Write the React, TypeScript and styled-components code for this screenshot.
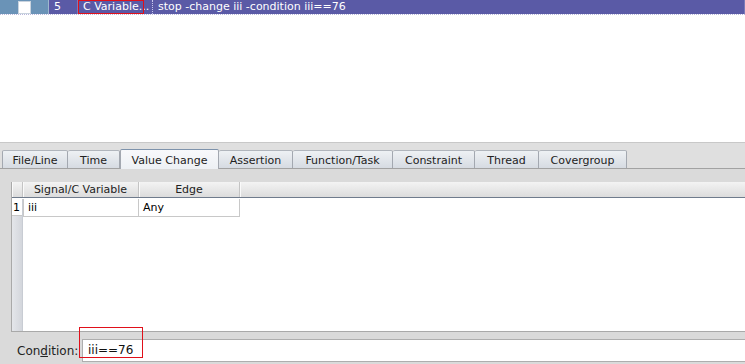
import React from 'react';
import styled, { createGlobalStyle } from 'styled-components';

const GlobalStyle = createGlobalStyle`
	html, body {
		margin: 0;
		padding: 0;
		background: #ffffff;
	}
	body {
		font-family: "DejaVu Sans", "Liberation Sans", sans-serif;
		font-size: 11px;
	}
`;

const Window = styled.div`
	width: 745px;
	height: 364px;
	overflow: hidden;
	display: flex;
	flex-direction: column;
	background: #ffffff;
`;

/* breakpoint list at the top */

const ListArea = styled.div`
	height: 142px;
	background: #ffffff;
	display: flex;
	flex-direction: column;
`;

const SelectedRow = styled.div`
	display: grid;
	grid-template-columns: 49px 29px 75px 1fr;
	height: 14px;
	border-bottom: 1px dotted #b8b8dc;
	color: #ffffff;
	line-height: 14px;
`;

const EnableCell = styled.div`
	background: #6a93b7;
	border-right: 1px solid #9fb7cf;
	display: flex;
	align-items: center;
	justify-content: center;
`;

const CheckBox = styled.span`
	display: block;
	width: 11px;
	height: 11px;
	background: #ffffff;
	border: 1px solid #c9d3de;
`;

const Cell = styled.div<{ $dotted?: boolean }>`
	position: relative;
	background: #5a5aa6;
	padding-left: 5px;
	white-space: nowrap;
	overflow: hidden;
	border-right: ${(p) => (p.$dotted ? '1px dotted #c8c8ec' : '1px solid #7a7ab8')};
`;

const Highlight = styled.span<{ $w: number; $h: number }>`
	position: absolute;
	left: 0;
	top: 0;
	width: ${(p) => p.$w}px;
	height: ${(p) => p.$h}px;
	border: 1px solid #e0101a;
	box-sizing: border-box;
	pointer-events: none;
`;

/* tabs */

const TabBar = styled.div`
	height: 27px;
	box-sizing: border-box;
	border-top: 1px solid #c8c8c8;
	border-bottom: 1px solid #a2a2a2;
	background: #dfdfdf;
	display: flex;
	align-items: flex-end;
	padding-left: 2px;
`;

const Tab = styled.div<{ $active?: boolean; $w: number }>`
	position: relative;
	width: ${(p) => p.$w}px;
	height: ${(p) => (p.$active ? '20px' : '18px')};
	margin-bottom: ${(p) => (p.$active ? '-1px' : '0')};
	box-sizing: border-box;
	display: flex;
	align-items: center;
	justify-content: center;
	white-space: nowrap;
	color: #222222;
	border: 1px solid #a3a8b0;
	border-bottom: none;
	border-left: ${(p) => (p.$active ? '1px solid #a3a8b0' : 'none')};
	border-top: 1px solid ${(p) => (p.$active ? '#7d92ab' : '#b0b5bc')};
	border-radius: 2px 2px 0 0;
	padding-top: ${(p) => (p.$active ? '1px' : '1px')};
	background: ${(p) =>
		p.$active
			? 'linear-gradient(#f8f9fb, #edf0f4)'
			: 'linear-gradient(#eef1f4, #d6dbe2)'};
	&:first-child {
		border-left: 1px solid #a3a8b0;
	}
`;

/* value change panel */

const Panel = styled.div`
	flex: 1;
	background: #dadada;
	display: flex;
	flex-direction: column;
	padding: 13px 0 0 11px;
	min-height: 0;
`;

const Table = styled.div`
	height: 150px;
	box-sizing: border-box;
	border-left: 1px solid #a9a9a9;
	border-bottom: 1px solid #a9a9a9;
	background: #ffffff;
	display: flex;
	flex-direction: column;
`;

const HeaderRow = styled.div`
	display: grid;
	grid-template-columns: 11px 116px 101px 1fr;
	height: 16px;
	box-sizing: border-box;
	background: linear-gradient(#f3f3f3, #dcdcdc);
	border-bottom: 1px solid #6f7b8c;
	color: #222222;
	line-height: 15px;
`;

const HeaderCell = styled.div`
	text-align: center;
	border-right: 1px solid #c4c4c4;
	box-shadow: inset 1px 0 0 #fafafa;
	white-space: nowrap;
	&:last-child {
		border-right: none;
	}
`;

const Body = styled.div`
	flex: 1;
	display: flex;
	min-height: 0;
	padding-top: 1px;
`;

const Gutter = styled.div`
	width: 11px;
	background: linear-gradient(90deg, #e4e6ea, #d3d6dc);
	border-right: 1px solid #c8ccd3;
	box-sizing: border-box;
`;

const RowNumber = styled.div`
	height: 17px;
	line-height: 17px;
	padding-left: 1px;
	background: #ffffff;
	color: #000000;
	border-bottom: 1px solid #c8c8c8;
	box-sizing: border-box;
`;

const Rows = styled.div`
	flex: 1;
`;

const DataRow = styled.div`
	display: grid;
	grid-template-columns: 116px 101px;
	height: 17px;
`;

const DataCell = styled.div`
	line-height: 17px;
	padding-left: 4px;
	color: #000000;
	border-right: 1px solid #c8c8c8;
	border-bottom: 1px solid #c8c8c8;
	box-sizing: border-box;
	&:first-child {
		border-left: 1px solid #c8c8c8;
	}
`;

const ConditionRow = styled.div`
	display: flex;
	align-items: center;
	gap: 8px;
	margin: 7px 0 0 6px;
	height: 23px;
`;

const Label = styled.label`
	color: #222222;
	font-size: 12px;
	width: 57px;
	white-space: nowrap;
	u {
		text-decoration: underline;
	}
`;

const InputWrap = styled.div`
	position: relative;
	flex: 1;
	height: 23px;
`;

const Input = styled.div`
	height: 23px;
	box-sizing: border-box;
	background: #ffffff;
	border: 1px solid #aeaeae;
	border-right: none;
	padding-left: 5px;
	line-height: 21px;
	font-size: 12px;
	color: #111111;
`;

const Annotation = styled.span`
	position: absolute;
	left: -3px;
	top: -12px;
	width: 64px;
	height: 31px;
	border: 1px solid #e0101a;
	box-sizing: border-box;
	pointer-events: none;
`;

const tabs: [string, number][] = [
	['File/Line', 66],
	['Time', 52],
	['Value Change', 99],
	['Assertion', 74],
	['Function/Task', 100],
	['Constraint', 82],
	['Thread', 64],
	['Covergroup', 88],
];

export default function App(): JSX.Element {
	return (
		<Window>
			<GlobalStyle />
			<ListArea>
				<SelectedRow>
					<EnableCell>
						<CheckBox />
					</EnableCell>
					<Cell>5</Cell>
					<Cell $dotted>
						<Highlight $w={66} $h={14} />
						C Variable...
					</Cell>
					<Cell>stop -change iii -condition iii==76</Cell>
				</SelectedRow>
			</ListArea>
			<TabBar>
				{tabs.map(([t, w]) => (
					<Tab key={t} $w={w} $active={t === 'Value Change'}>
						{t}
					</Tab>
				))}
			</TabBar>
			<Panel>
				<Table>
					<HeaderRow>
						<HeaderCell />
						<HeaderCell>Signal/C Variable</HeaderCell>
						<HeaderCell>Edge</HeaderCell>
						<HeaderCell />
					</HeaderRow>
					<Body>
						<Gutter>
							<RowNumber>1</RowNumber>
						</Gutter>
						<Rows>
							<DataRow>
								<DataCell>iii</DataCell>
								<DataCell>Any</DataCell>
							</DataRow>
						</Rows>
					</Body>
				</Table>
				<ConditionRow>
					<Label>
						Con<u>d</u>ition:
					</Label>
					<InputWrap>
						<Input>iii==76</Input>
						<Annotation />
					</InputWrap>
				</ConditionRow>
			</Panel>
		</Window>
	);
}
